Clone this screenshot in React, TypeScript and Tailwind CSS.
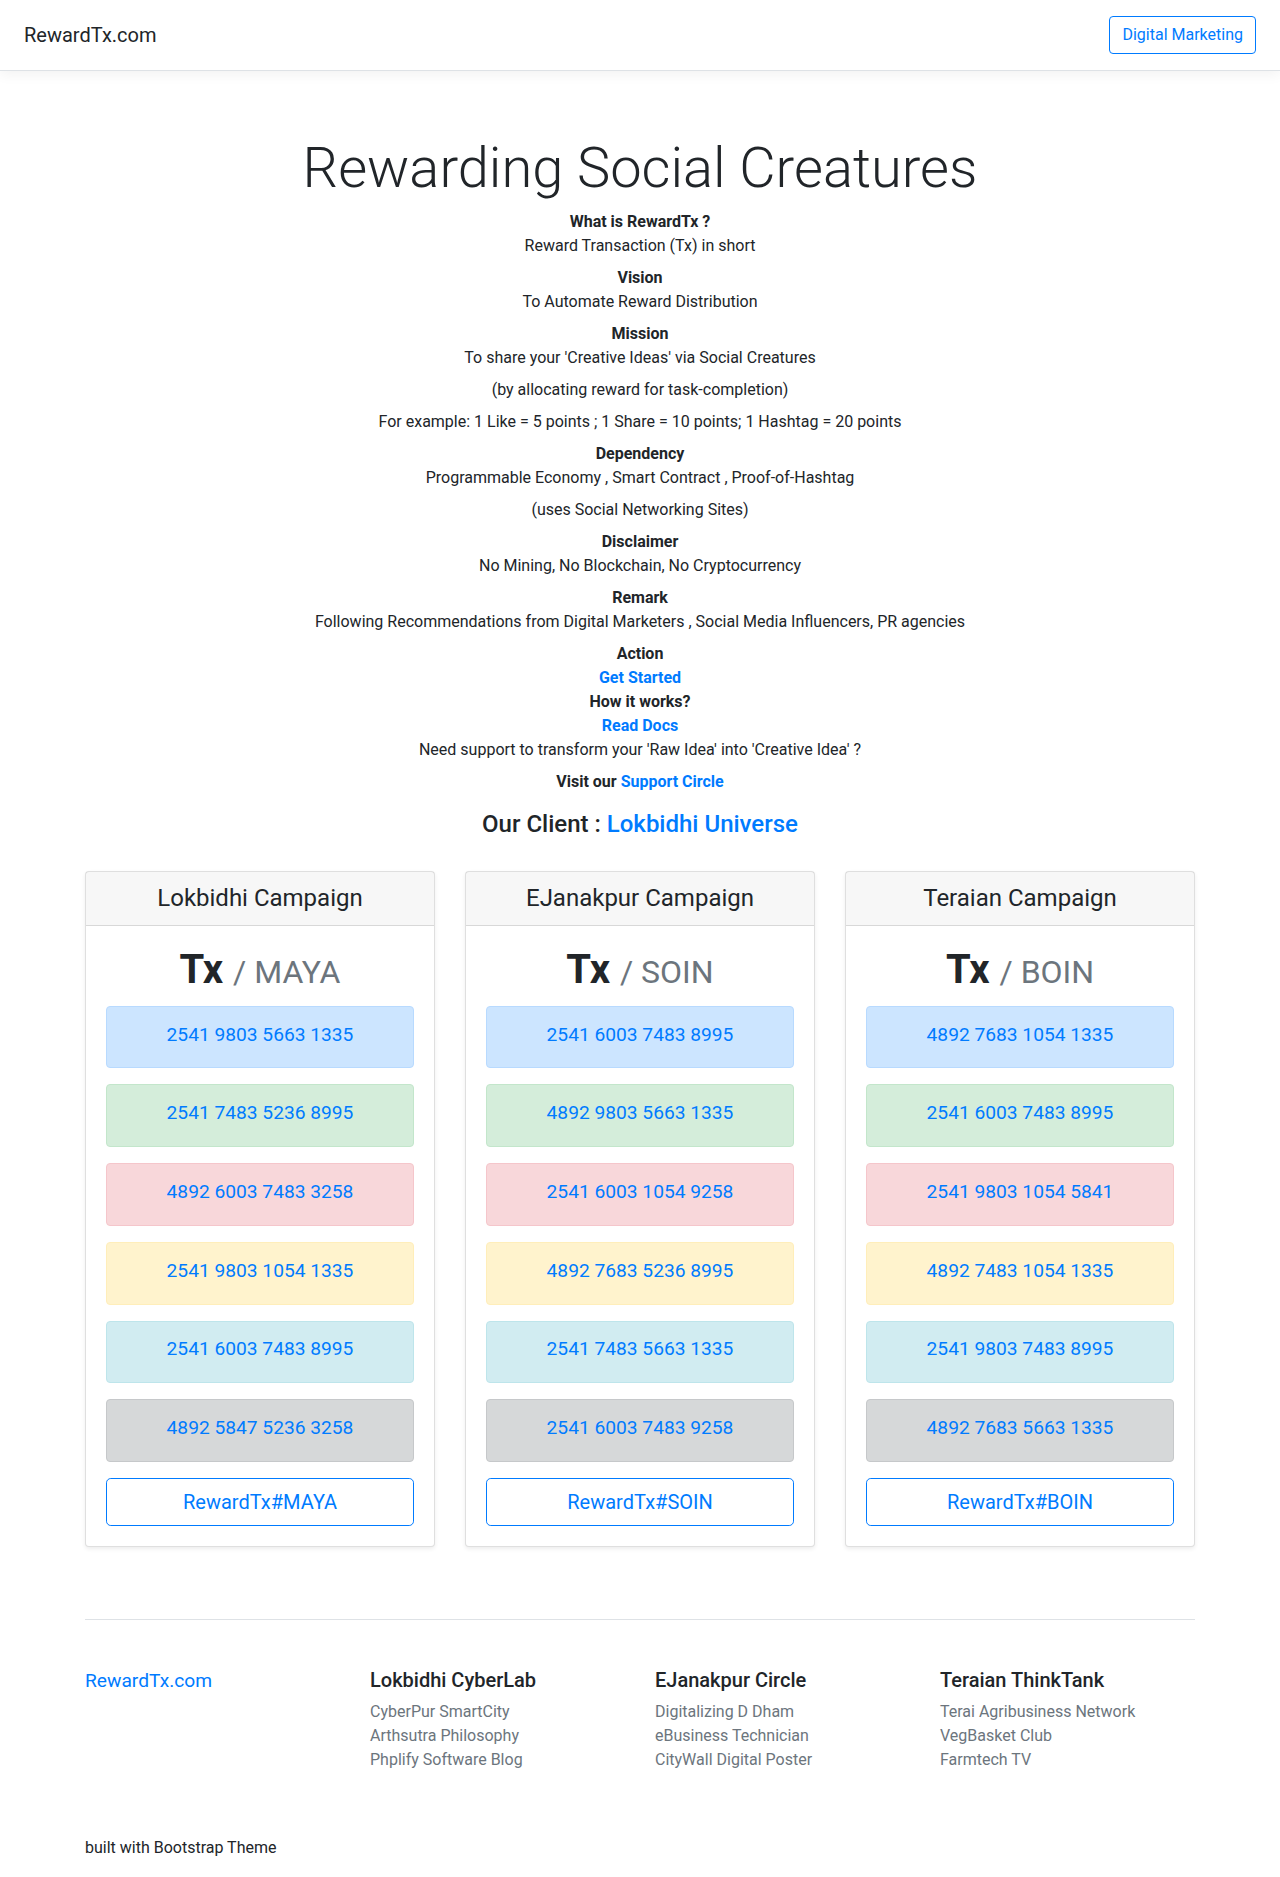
import React from "react";

const blue = "text-[#007bff]";

type Campaign = {
  title: string;
  coin: string;
  rows: string[];
};

const campaigns: Campaign[] = [
  {
    title: "Lokbidhi Campaign",
    coin: "MAYA",
    rows: [
      "2541 9803 5663 1335",
      "2541 7483 5236 8995",
      "4892 6003 7483 3258",
      "2541 9803 1054 1335",
      "2541 6003 7483 8995",
      "4892 5847 5236 3258",
    ],
  },
  {
    title: "EJanakpur Campaign",
    coin: "SOIN",
    rows: [
      "2541 6003 7483 8995",
      "4892 9803 5663 1335",
      "2541 6003 1054 9258",
      "4892 7683 5236 8995",
      "2541 7483 5663 1335",
      "2541 6003 7483 9258",
    ],
  },
  {
    title: "Teraian Campaign",
    coin: "BOIN",
    rows: [
      "4892 7683 1054 1335",
      "2541 6003 7483 8995",
      "2541 9803 1054 5841",
      "4892 7483 1054 1335",
      "2541 9803 7483 8995",
      "4892 7683 5663 1335",
    ],
  },
];

const alertStyles = [
  "bg-[#cce5ff] border-[#b8daff]",
  "bg-[#d4edda] border-[#c3e6cb]",
  "bg-[#f8d7da] border-[#f5c6cb]",
  "bg-[#fff3cd] border-[#ffeeba]",
  "bg-[#d1ecf1] border-[#bee5eb]",
  "bg-[#d6d8d9] border-[#c6c8ca]",
];

const footerCols = [
  {
    title: "Lokbidhi CyberLab",
    items: ["CyberPur SmartCity", "Arthsutra Philosophy", "Phplify Software Blog"],
  },
  {
    title: "EJanakpur Circle",
    items: ["Digitalizing D Dham", "eBusiness Technician", "CityWall Digital Poster"],
  },
  {
    title: "Teraian ThinkTank",
    items: ["Terai Agribusiness Network", "VegBasket Club", "Farmtech TV"],
  },
];

function CampaignCard({ c }: { c: Campaign }) {
  return (
    <div className="mb-6 flex flex-col rounded border border-black/[.125] bg-white text-center shadow-[0_0.125rem_0.25rem_rgba(0,0,0,0.075)]">
      <div className="border-b border-black/[.125] bg-black/[.03] px-5 py-3">
        <h4 className="text-2xl font-normal leading-[1.2]">{c.title}</h4>
      </div>
      <div className="p-5">
        <h1 className="mb-3 text-[40px] font-medium leading-[1.2]">
          <b className="font-bold">Tx</b>{" "}
          <small className="text-[32px] font-normal text-[#6c757d]">/ {c.coin}</small>
        </h1>
        {c.rows.map((r, i) => (
          <div
            key={i}
            className={`mb-4 flex h-[62.7px] items-center justify-center rounded border pb-[6px] text-[19.2px] leading-[1.2] ${blue} ${alertStyles[i]}`}
          >
            {r}
          </div>
        ))}
        <button
          className={`w-full rounded-[0.3rem] border border-[#007bff] px-4 py-2 text-xl leading-[1.5] ${blue}`}
        >
          RewardTx#{c.coin}
        </button>
      </div>
    </div>
  );
}

export default function App() {
  return (
    <div className="bg-white font-['Roboto',sans-serif] text-base leading-6 text-[#212529]">
      <header className="mb-4 flex items-center justify-between border-b border-[#dee2e6] bg-white px-6 py-4 shadow-[0_0.25rem_0.75rem_rgba(0,0,0,0.05)]">
        <h5 className="text-xl font-normal leading-[1.2]">RewardTx.com</h5>
        <a className={`rounded border border-[#007bff] px-3 py-[6px] leading-6 ${blue}`}>
          Digital Marketing
        </a>
      </header>

      <div className="mx-auto max-w-[700px] px-4 pb-6 pt-12 text-center">
        <h1 className="-mx-4 mb-2 whitespace-nowrap text-[56px] font-light leading-[1.2]">
          Rewarding Social Creatures
        </h1>

        <div className="mb-2">
          <div className="font-bold">What is RewardTx ?</div>
          <div>Reward Transaction (Tx) in short</div>
        </div>
        <div className="mb-2">
          <div className="font-bold">Vision</div>
          <div>To Automate Reward Distribution</div>
        </div>
        <div className="mb-2">
          <div className="font-bold">Mission</div>
          <div>To share your 'Creative Ideas' via Social Creatures</div>
        </div>
        <div className="mb-2">(by allocating reward for task-completion)</div>
        <div className="mb-2">For example: 1 Like = 5 points ; 1 Share = 10 points; 1 Hashtag = 20 points</div>
        <div className="mb-2">
          <div className="font-bold">Dependency</div>
          <div>Programmable Economy , Smart Contract , Proof-of-Hashtag</div>
        </div>
        <div className="mb-2">(uses Social Networking Sites)</div>
        <div className="mb-2">
          <div className="font-bold">Disclaimer</div>
          <div>No Mining, No Blockchain, No Cryptocurrency</div>
        </div>
        <div className="mb-2">
          <div className="font-bold">Remark</div>
          <div>Following Recommendations from Digital Marketers , Social Media Influencers, PR agencies</div>
        </div>
        <div className="mb-2">
          <div className="font-bold">Action</div>
          <div>
            <a className={`font-bold ${blue}`}>Get Started</a>
          </div>
          <div className="font-bold">How it works?</div>
          <div>
            <a className={`font-bold ${blue}`}>Read Docs</a>
          </div>
          <div>Need support to transform your 'Raw Idea' into 'Creative Idea' ?</div>
        </div>
        <div className="mb-4 font-bold">
          Visit our <a className={blue}>Support Circle</a>
        </div>
        <h4 className="mb-2 text-2xl font-medium leading-[1.2]">
          Our Client : <a className={blue}>Lokbidhi Universe</a>
        </h4>
      </div>

      <div className="mx-auto w-[1110px]">
        <div className="grid grid-cols-3 gap-[30px]">
          {campaigns.map((c) => (
            <CampaignCard key={c.title} c={c} />
          ))}
        </div>

        <footer className="my-12 border-t border-[#dee2e6] pt-12">
          <div className="grid grid-cols-4 gap-[30px]">
            <div className="text-xl leading-[1.2]">
              <a className={`text-[19.2px] ${blue}`}>RewardTx.com</a>
            </div>
            {footerCols.map((col) => (
              <div key={col.title}>
                <h5 className="mb-2 text-xl font-medium leading-[1.2]">{col.title}</h5>
                <ul className="mb-4 text-[#6c757d]">
                  {col.items.map((it) => (
                    <li key={it}>
                      <a>{it}</a>
                    </li>
                  ))}
                </ul>
              </div>
            ))}
          </div>
        </footer>
        <p className="pb-4">built with Bootstrap Theme</p>
      </div>
    </div>
  );
}
